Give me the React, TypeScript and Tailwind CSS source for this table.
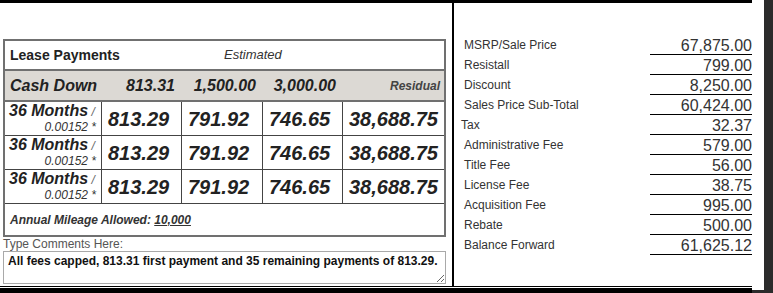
import React from 'react';

const fees = [
    { label: 'MSRP/Sale Price', value: '67,875.00' },
    { label: 'Resistall', value: '799.00' },
    { label: 'Discount', value: '8,250.00' },
    { label: 'Sales Price Sub-Total', value: '60,424.00' },
    { label: 'Tax', value: '32.37', tight: true },
    { label: 'Administrative Fee', value: '579.00' },
    { label: 'Title Fee', value: '56.00' },
    { label: 'License Fee', value: '38.75' },
    { label: 'Acquisition Fee', value: '995.00' },
    { label: 'Rebate', value: '500.00' },
    { label: 'Balance Forward', value: '61,625.12' },
];

const payments = ['813.29', '791.92', '746.65', '38,688.75'];

function PaymentRow() {
    return (
        <div className="flex h-[34px] border-b border-[#444]">
            <div className="w-[96px] flex flex-col pt-[1px]">
                <div className="pl-[4px] leading-[16px] whitespace-nowrap">
                    <span className="text-[16px] font-bold italic text-[#222]">36 Months</span>
                    <span className="text-[12px] italic text-[#666]"> /</span>
                </div>
                <div className="text-right pr-[5px] text-[12px] italic leading-[14px] text-[#333]">0.00152 *</div>
            </div>
            {payments.map((p, i) => (
                <div
                    key={i}
                    className={`flex items-center pl-[6px] border-l border-[#444] text-[20px] font-bold italic text-[#222] ${i === 0 ? 'w-[80px]' : i === 1 ? 'w-[81px]' : i === 2 ? 'w-[80px]' : 'w-[102px]'}`}
                >
                    {p}
                </div>
            ))}
        </div>
    );
}

export default function App() {
    return (
        <div className="flex w-[773px] h-[293px] bg-[#2b2b2b] overflow-hidden font-['Liberation_Sans',Arial,sans-serif]">
            <div className="w-[752px] h-full flex flex-col bg-white">
                <div className="h-[3px] bg-black" />
                <div className="flex h-[283px]">
                    {/* lease grid */}
                    <div className="w-[452px] pl-[3px] pt-[36px]">
                        <div className="w-[443px] border-2 border-[#707070]">
                            <div className="flex items-center h-[28px] pl-[5px]">
                                <span className="w-[214px] text-[14px] font-bold text-[#222]">Lease Payments</span>
                                <span className="text-[13px] italic text-[#333]">Estimated</span>
                            </div>
                            <div className="flex h-[33px] bg-[#dcd9d4] border-y-2 border-[#707070] text-[16px] font-bold italic text-[#222]">
                                <div className="w-[96px] flex items-center pl-[5px] whitespace-nowrap">Cash Down</div>
                                <div className="w-[80px] flex items-center justify-end pr-[6px]">813.31</div>
                                <div className="w-[81px] flex items-center justify-end pr-[6px]">1,500.00</div>
                                <div className="w-[80px] flex items-center justify-end pr-[6px]">3,000.00</div>
                                <div className="w-[102px] flex items-center justify-end pr-[4px] text-[12px] text-[#444]">Residual</div>
                            </div>
                            <PaymentRow />
                            <PaymentRow />
                            <PaymentRow />
                            <div className="flex items-center h-[31px] pl-[5px] text-[12px] font-bold italic text-[#333]">
                                Annual Mileage Allowed:&nbsp;<span className="underline">10,000</span>
                            </div>
                        </div>
                        <div className="h-[14px] text-[12px] leading-[14px] text-[#555]">Type Comments Here:</div>
                        <textarea
                            readOnly
                            defaultValue="All fees capped, 813.31 first payment and 35 remaining payments of 813.29."
                            className="block w-[443px] h-[33px] border border-[#a9a9a9] px-[4px] py-[2px] text-[12px] font-bold text-[#111] leading-[14px] outline-none"
                        />
                    </div>
                    <div className="w-[2px] bg-black" />
                    {/* fee summary */}
                    <div className="w-[298px] pt-[32px]">
                        {fees.map((f) => (
                            <div key={f.label} className="flex h-[20px]">
                                <div className={`w-[196px] flex items-center text-[12px] text-[#333] ${f.tight ? 'pl-[7px]' : 'pl-[10px]'}`}>
                                    {f.label}
                                </div>
                                <div className="w-[102px] flex flex-col justify-end">
                                    <div className="border-b border-black text-right text-[16px] leading-[16px] text-[#333]">{f.value}</div>
                                </div>
                            </div>
                        ))}
                    </div>
                </div>
                <div className="h-px bg-black" />
                <div className="h-px" />
                <div className="flex-1 bg-black" />
            </div>
            <div className="w-[12px] h-[290px] bg-white" />
        </div>
    );
}
